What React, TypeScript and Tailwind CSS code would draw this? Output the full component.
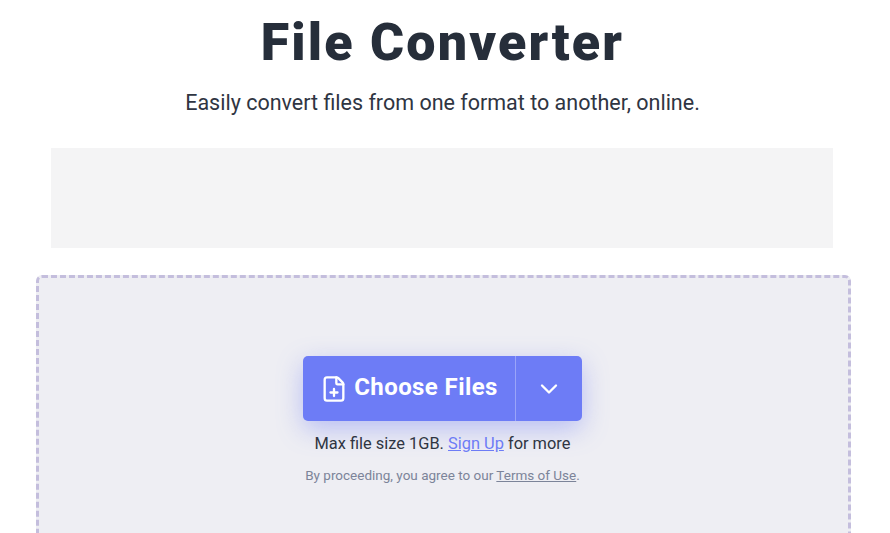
import { ChevronDown, FilePlus } from 'lucide-react';

export default function App() {
    return (
        <div className="h-[533px] w-[885px] overflow-hidden bg-white font-['Roboto',sans-serif]">
            {/* Header */}
            <div className="pt-[12px] text-center">
                <h1 className="text-[52px] leading-[62px] font-black tracking-[2.2px] text-[#262e3a]">File Converter</h1>
                <p className="mt-[14px] text-[21.5px] leading-[30px] text-[#2f3542]">
                    Easily convert files from one format to another, online.
                </p>
            </div>

            {/* Ad slot */}
            <div className="mt-[30px] ml-[51px] h-[100px] w-[782px] bg-[#f4f4f5]"></div>

            {/* Drop zone */}
            <div className="mt-[27px] ml-[36px] h-[300px] w-[815px] rounded-[6px] border-[3px] border-dashed border-[#c4bedd] bg-[#eeeef3] pt-[78px] pr-[2px]">
                <div className="flex flex-col items-center">
                    <div className="flex h-[65px] w-[279px] rounded-[5px] bg-[#6d7cf6] text-white shadow-[0_8px_26px_rgba(109,124,246,0.42)]">
                        <div className="flex flex-1 items-center justify-center gap-[6px] border-r border-[#9aa4f9]">
                            <FilePlus className="h-[28px] w-[28px]" strokeWidth={2} />
                            <span className="pb-[3px] text-[24px] font-bold tracking-[0.4px]">Choose Files</span>
                        </div>
                        <div className="flex w-[66px] items-center justify-center">
                            <ChevronDown className="h-[28px] w-[28px]" strokeWidth={2} />
                        </div>
                    </div>
                    <p className="mt-[11px] text-[16.4px] leading-[24px] text-[#2f3542]">
                        Max file size 1GB. <a className="text-[#6d7cf6] underline">Sign Up</a> for more
                    </p>
                    <p className="mt-[9px] text-[13.5px] leading-[20px] text-[#7c8499]">
                        By proceeding, you agree to our <a className="underline">Terms of Use</a>.
                    </p>
                </div>
            </div>
        </div>
    );
}
